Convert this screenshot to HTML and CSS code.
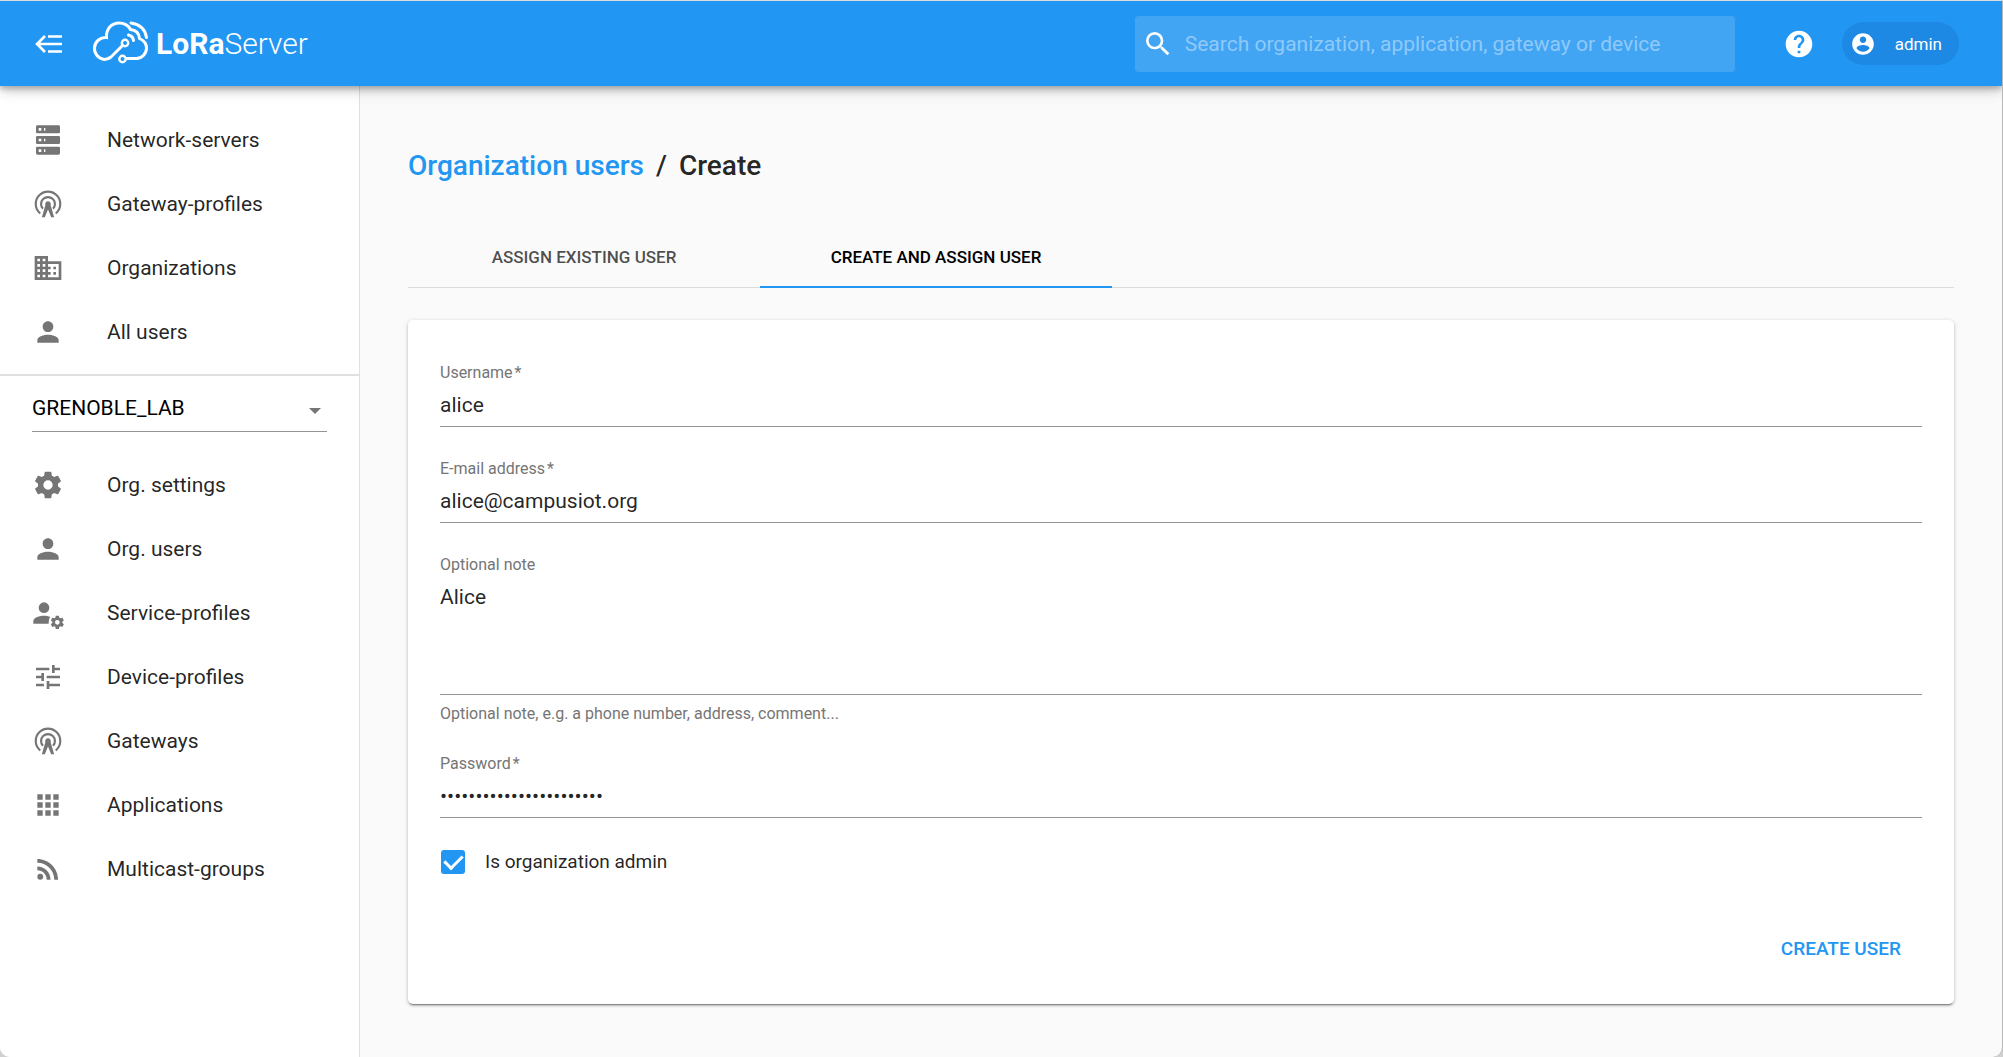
FILE: index.html
```html
<!DOCTYPE html>
<html lang="en">
<head>
<meta charset="utf-8">
<meta name="viewport" content="width=device-width, initial-scale=1">
<title>LoRa Server</title>
<link rel="stylesheet" href="styles.css">
</head>
<body>
<svg class="sprite" aria-hidden="true">
  <symbol id="i-person" viewBox="0 0 24 24"><path d="M12 12c2.21 0 4-1.79 4-4s-1.79-4-4-4-4 1.790-4 4 1.790 4 4 4zm0 2c-2.670 0-8 1.340-8 4v2h16v-2c0-2.660-5.330-4-8-4z"/></symbol>
  <symbol id="i-gateway" viewBox="0 0 24 24"><path d="M12 10a2.200 2.200 0 0 1 2 3L16.600 22h-2.200L12 16.200 9.600 22H7.400L10 13A2.200 2.200 0 0 1 12 10z"/><path fill="none" stroke="currentColor" stroke-width="1.600" d="M8.200 15.600a5.200 5.200 0 1 1 7.600 0M6.200 19.100a9.200 9.200 0 1 1 11.600 0"/></symbol>
  <symbol id="i-gear" viewBox="0 0 24 24"><path d="M12 15.500A3.500 3.500 0 0 1 8.500 12 3.500 3.500 0 0 1 12 8.500a3.500 3.500 0 0 1 3.500 3.500 3.500 3.500 0 0 1-3.500 3.500m7.430-2.530c.04-.32.070-.64.070-.97 0-.33-.03-.66-.07-1l2.110-1.630c.19-.15.240-.42.120-.64l-2-3.460c-.12-.22-.39-.31-.61-.22l-2.490 1c-.52-.39-1.060-.73-1.690-.98l-.37-2.650A.506.506 0 0 0 14 2h-4c-.25 0-.46.180-.5.420l-.37 2.650c-.63.250-1.170.590-1.690.98l-2.490-1c-.22-.09-.49 0-.61.220l-2 3.460c-.13.220-.07.490.12.640L4.570 11c-.04.340-.07.670-.07 1 0 .33.030.650.070.970l-2.110 1.660c-.19.150-.25.420-.12.640l2 3.460c.12.220.39.300.61.220l2.490-1.010c.52.400 1.060.740 1.690.990l.37 2.650c.04.240.25.420.5.420h4c.25 0 .46-.18.500-.42l.37-2.650c.63-.26 1.170-.59 1.690-.99l2.490 1.010c.22.080.49 0 .61-.22l2-3.460c.12-.22.070-.49-.12-.64l-2.110-1.660z"/></symbol>
</svg>
<div class="window">
<header class="appbar">
  <button class="icon-button menu" aria-label="Toggle menu">
    <svg viewBox="0 0 27 18" width="27" height="18" fill="none" stroke="#fff" stroke-width="2.600"><path d="M13 1.500h14M2 9h25M13 16.500h14M10 1 2 9l8 8"/></svg>
  </button>
  <a class="logo" href="#" aria-label="LoRaServer">
    <svg width="58" height="44" viewBox="0 0 58 44" fill="none" stroke="#fff" stroke-width="3" stroke-linecap="round">
      <path d="M30.500 23.500 19 35Q16 37.500 12.500 37.500A11 11 0 0 1 14.500 15.500C14 7 19.500 1 27 1Q35 1 38.500 7.500C44 8 47 11.500 47.500 16.500C52 18.500 54.500 22 54.500 26A10.500 10.500 0 0 1 44.500 36.500H34.500"/>
      <circle cx="33" cy="21" r="3.200" stroke-width="2.400"/><circle cx="30.500" cy="37" r="3.200" stroke-width="2.400"/>
      <path d="M39 1Q52.500 3 54.500 15.500M36.500 13Q41 14 41.500 18.500"/>
    </svg>
    <span class="logo-text"><b>LoRa</b>Server</span>
  </a>
  <form class="search" role="search">
    <svg width="32" height="32" viewBox="0 0 24 24" fill="#fff"><path d="M15.500 14h-.79l-.28-.27A6.471 6.471 0 0 0 16 9.500 6.500 6.500 0 1 0 9.500 16c1.610 0 3.090-.59 4.230-1.570l.27.280v.790l5 4.990L20.490 19l-4.990-5zm-6 0C7.010 14 5 11.990 5 9.500S7.010 5 9.500 5 14 7.010 14 9.500 11.990 14 9.500 14z"/></svg>
    <input type="search" aria-label="Search" placeholder="Search organization, application, gateway or device">
  </form>
  <a class="icon-button" href="#" aria-label="Help"><svg width="32" height="32" viewBox="0 0 24 24" fill="#fff"><path d="M12 2C6.480 2 2 6.480 2 12s4.480 10 10 10 10-4.480 10-10S17.520 2 12 2zm1 17h-2v-2h2v2zm2.070-7.750l-.9.920C13.450 12.900 13 13.500 13 15h-2v-.5c0-1.100.45-2.100 1.170-2.830l1.240-1.260c.37-.36.590-.86.590-1.410 0-1.100-.9-2-2-2s-2 .9-2 2H8c0-2.210 1.790-4 4-4s4 1.790 4 4c0 .88-.36 1.680-.93 2.250z"/></svg></a>
  <button class="chip"><svg width="26" height="26" viewBox="0 0 24 24" fill="#fff"><path d="M12 2C6.480 2 2 6.480 2 12s4.480 10 10 10 10-4.480 10-10S17.520 2 12 2zm0 3c1.660 0 3 1.340 3 3s-1.340 3-3 3-3-1.340-3-3 1.340-3 3-3zm0 14.200c-2.500 0-4.710-1.280-6-3.220.03-1.990 4-3.080 6-3.080 1.990 0 5.970 1.090 6 3.080-1.290 1.940-3.500 3.220-6 3.220z"/></svg>admin</button>
</header>
<div class="body">
  <nav class="drawer">
    <ul class="nav">
      <li><a href="#"><svg class="icon" viewBox="0 0 24 24"><path fill-rule="evenodd" d="M4 1h16a1 1 0 0 1 1 1v4a1 1 0 0 1-1 1H4a1 1 0 0 1-1-1V2a1 1 0 0 1 1-1zm0 8h16a1 1 0 0 1 1 1v4a1 1 0 0 1-1 1H4a1 1 0 0 1-1-1v-4a1 1 0 0 1 1-1zm0 8h16a1 1 0 0 1 1 1v4a1 1 0 0 1-1 1H4a1 1 0 0 1-1-1v-4a1 1 0 0 1 1-1zM9 5h1V3H9v2zm0 8h1v-2H9v2zm0 8h1v-2H9v2zM5 3v2h2V3H5zm0 8v2h2v-2H5zm0 8v2h2v-2H5z"/></svg>Network-servers</a></li>
      <li><a href="#"><svg class="icon"><use href="#i-gateway"/></svg>Gateway-profiles</a></li>
      <li><a href="#"><svg class="icon" viewBox="0 0 24 24"><path d="M12 7V3H2v18h20V7H12zM6 19H4v-2h2v2zm0-4H4v-2h2v2zm0-4H4V9h2v2zm0-4H4V5h2v2zm4 12H8v-2h2v2zm0-4H8v-2h2v2zm0-4H8V9h2v2zm0-4H8V5h2v2zm10 12h-8v-2h2v-2h-2v-2h2v-2h-2V9h8v10zm-2-8h-2v2h2v-2zm0 4h-2v2h2v-2z"/></svg>Organizations</a></li>
      <li><a href="#"><svg class="icon"><use href="#i-person"/></svg>All users</a></li>
    </ul>
    <div class="org">
      <select aria-label="Organization"><option>GRENOBLE_LAB</option></select>
      <svg class="arrow" width="12" height="6" viewBox="0 0 12 6"><path d="M0 0h12L6 6z"/></svg>
    </div>
    <ul class="nav">
      <li><a href="#"><svg class="icon"><use href="#i-gear"/></svg>Org. settings</a></li>
      <li><a href="#"><svg class="icon"><use href="#i-person"/></svg>Org. users</a></li>
      <li><a href="#"><svg class="icon" viewBox="0 0 24 24"><circle cx="9" cy="8" r="4"/><path d="M9 14c-3 0-8 1.300-8 4v2h11.500c0-2 .3-3.700 1.200-5.100C12.200 14.300 10.300 14 9 14z"/><svg x="13" y="13" width="12" height="12" overflow="visible"><use href="#i-gear"/></svg></svg>Service-profiles</a></li>
      <li><a href="#"><svg class="icon" viewBox="0 0 24 24"><path d="M3 17v2h6v-2H3zM3 5v2h10V5H3zm10 16v-2h8v-2h-8v-2h-2v6h2zM7 9v2H3v2h4v2h2V9H7zm14 4v-2H11v2h10zm-6-4h2V7h4V5h-4V3h-2v6z"/></svg>Device-profiles</a></li>
      <li><a href="#"><svg class="icon"><use href="#i-gateway"/></svg>Gateways</a></li>
      <li><a href="#"><svg class="icon" viewBox="0 0 24 24"><path d="M4 8h4V4H4v4zm6 12h4v-4h-4v4zm-6 0h4v-4H4v4zm0-6h4v-4H4v4zm6 0h4v-4h-4v4zm6-10v4h4V4h-4zm-6 4h4V4h-4v4zm6 6h4v-4h-4v4zm0 6h4v-4h-4v4z"/></svg>Applications</a></li>
      <li><a href="#"><svg class="icon" viewBox="0 0 24 24"><circle cx="6.180" cy="17.820" r="2.180"/><path d="M4 4.440v2.830c7.030 0 12.730 5.700 12.730 12.730h2.830c0-8.590-6.970-15.560-15.560-15.560zm0 5.660v2.830c3.900 0 7.070 3.170 7.070 7.070h2.830c0-5.470-4.430-9.900-9.900-9.900z"/></svg>Multicast-groups</a></li>
    </ul>
  </nav>
  <main class="content">
    <h1 class="crumbs"><a href="#">Organization users</a><span>/</span><span>Create</span></h1>
    <div class="tabs" role="tablist">
      <button class="tab" role="tab" aria-selected="false">ASSIGN EXISTING USER</button>
      <button class="tab" role="tab" aria-selected="true">CREATE AND ASSIGN USER</button>
    </div>
    <form class="card">
      <div class="field">
        <label for="username">Username<span class="req">*</span></label>
        <input id="username" type="text" value="alice">
      </div>
      <div class="field">
        <label for="email">E-mail address<span class="req">*</span></label>
        <input id="email" type="text" value="alice@campusiot.org">
      </div>
      <div class="field">
        <label for="note">Optional note</label>
        <textarea id="note">Alice</textarea>
        <p class="help">Optional note, e.g. a phone number, address, comment...</p>
      </div>
      <div class="field">
        <label for="password">Password<span class="req">*</span></label>
        <input id="password" type="password" value="campusiot-lora-alice-01">
      </div>
      <label class="check"><input type="checkbox" checked>Is organization admin</label>
      <div class="actions"><button class="submit" type="button">CREATE USER</button></div>
    </form>
  </main>
</div>
</div>
</body>
</html>
```
FILE: styles.css
```css
* { box-sizing: border-box; }
body {
  margin: 0;
  background: #d0d0d0;
  color: rgba(0, 0, 0, 0.87);
  font-family: Roboto, "Liberation Sans", sans-serif;
  font-size: 21px;
}
button, input, textarea, select {
  font: inherit;
  color: inherit;
  border: 0;
  background: none;
  padding: 0;
  margin: 0;
  outline: 0;
}
a { color: inherit; text-decoration: none; }
.sprite { position: absolute; width: 0; height: 0; }

.window {
  display: flex;
  flex-direction: column;
  min-height: 100vh;
  background: #fafafa;
  border-top: 1px solid #dcdcdc;
  border-right: 1px solid #b8b8b8;
  border-radius: 0 0 10px 10px;
  overflow: hidden;
}

.appbar {
  display: flex;
  align-items: center;
  height: 85px;
  padding: 0 43px 0 32px;
  background: #2196f3;
  color: #fff;
  box-shadow: 0 3px 5px rgba(0, 0, 0, 0.2), 0 5px 13px rgba(0, 0, 0, 0.14), 0 1px 13px rgba(0, 0, 0, 0.12);
  z-index: 1;
}
.icon-button { display: flex; justify-content: center; }
.menu { width: 32px; }
.logo { display: flex; align-items: center; gap: 6px; margin-left: 28px; }
.logo svg { overflow: visible; }
.logo-text { font-size: 30px; font-weight: 300; line-height: 32px; }
.logo-text b { font-weight: 700; }
.search {
  display: flex;
  align-items: center;
  gap: 11px;
  width: 600px;
  height: 56px;
  margin: 0 48px 0 auto;
  padding: 0 7px;
  border-radius: 4px;
  background: rgba(255, 255, 255, 0.15);
}
.search input { flex: 1; min-width: 0; }
.search input::placeholder { color: rgba(255, 255, 255, 0.42); opacity: 1; }
.chip {
  display: flex;
  align-items: center;
  gap: 19px;
  height: 43px;
  margin-left: 27px;
  padding: 0 17px 0 8px;
  border-radius: 22px;
  background: #1e88e5;
  font-size: 17px;
}

.body { display: flex; flex: 1; }
.drawer {
  flex: none;
  width: 360px;
  padding-top: 11px;
  background: #fff;
  border-right: 1px solid #e0e0e0;
}
.nav { list-style: none; margin: 0; padding: 11px 0 10px; }
.nav a { display: flex; align-items: center; gap: 43px; height: 64px; padding: 0 32px; }
.icon { flex: none; width: 32px; height: 32px; fill: currentColor; color: #757575; overflow: visible; }
.org { position: relative; padding: 11px 32px 10px; border-top: 2px solid #e0e0e0; }
.org select {
  display: block;
  width: 100%;
  height: 45px;
  padding-bottom: 3px;
  appearance: none;
  border-bottom: 1px solid #949494;
  color: #000;
}
.arrow { position: absolute; right: 38px; top: 32px; fill: #757575; pointer-events: none; }

.content { flex: 1; min-width: 0; padding: 60px 48px 52px; }
.crumbs { display: flex; gap: 12px; margin: 0; font-size: 28px; line-height: 40px; font-weight: 500; }
.crumbs a { color: #2196f3; }
.tabs { display: flex; margin-top: 37px; height: 65px; border-bottom: 1px solid #dcdcdc; }
.tab { width: 352px; height: 65px; padding-top: 4px; font-size: 17px; font-weight: 500; color: rgba(0, 0, 0, 0.7); border-bottom: 2px solid transparent; }
.tab[aria-selected="true"] { color: #000; border-color: #2196f3; }

.card {
  margin-top: 32px;
  padding: 43px 32px 32px;
  border-radius: 5px;
  background: #fff;
  box-shadow: 0 1px 4px rgba(0, 0, 0, 0.2), 0 3px 1px -2px rgba(0, 0, 0, 0.3), 0 2px 2px rgba(0, 0, 0, 0.14);
}
.field { display: flex; flex-direction: column; margin-bottom: 32px; }
.field label { font-size: 16px; line-height: 20px; color: #757575; }
.req { margin-left: 2px; }
.field input { height: 44px; border-bottom: 1px solid #949494; }
.field textarea { display: block; height: 120px; padding: 10px 0; line-height: 25px; resize: none; border-bottom: 1px solid #949494; }
.help { margin: 10px 0 0; font-size: 16px; line-height: 17px; color: #757575; }
.check { display: flex; align-items: center; gap: 20px; padding-left: 1px; font-size: 19px; line-height: 22px; }
.check input {
  appearance: none;
  width: 24px;
  height: 24px;
  border-radius: 3px;
  background: #2196f3;
  display: grid;
  place-items: center;
}
.check input::after {
  content: "";
  width: 8px;
  height: 15px;
  border: solid #fff;
  border-width: 0 3px 3px 0;
  transform: translateY(-2px) rotate(45deg);
}
.actions { display: flex; justify-content: flex-end; margin-top: 50px; }
.submit { height: 48px; padding: 0 21px; font-size: 19px; font-weight: 500; color: #2196f3; }
```
